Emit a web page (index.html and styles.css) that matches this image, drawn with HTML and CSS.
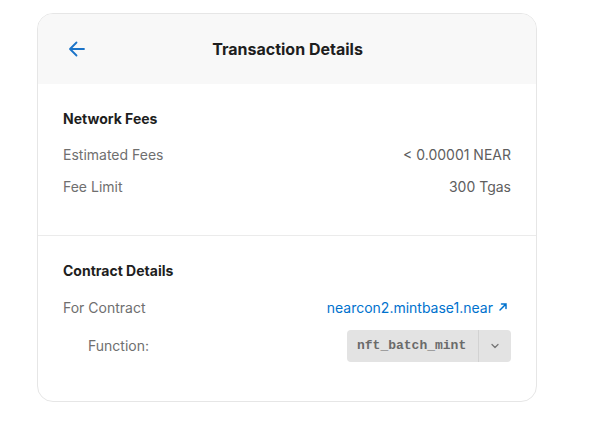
FILE: index.html
```html
<!DOCTYPE html>
<html>
<head>
<meta charset="utf-8">
<link rel="stylesheet" href="styles.css">
</head>
<body>
<div class="card">
  <div class="header">
    <button class="back" aria-label="Back">
      <svg width="20" height="20" viewBox="0 0 20 20" fill="none" stroke="#1a73c8" stroke-width="1.8" stroke-linecap="round" stroke-linejoin="round"><path d="M17 10H3.5M9.5 3.5L3 10l6.5 6.5"/></svg>
    </button>
    <h1 class="title">Transaction Details</h1>
  </div>
  <div class="section fees">
    <h2 class="heading">Network Fees</h2>
    <div class="row first"><span class="label">Estimated Fees</span><span class="value">&lt; 0.00001 NEAR</span></div>
    <div class="row second"><span class="label">Fee Limit</span><span class="value">300 Tgas</span></div>
  </div>
  <div class="section contract">
    <h2 class="heading">Contract Details</h2>
    <div class="row first"><span class="label">For Contract</span><a class="link" href="#">nearcon2.mintbase1.near <svg class="ext" width="10" height="10" viewBox="0 0 10 10" fill="none" stroke="#0072ce" stroke-width="1.5" stroke-linecap="round"><path d="M2 8L8 2M3.5 2H8v4.5"/></svg></a></div>
    <div class="row func"><span class="label indent">Function:</span>
      <div class="select"><span class="fn">nft_batch_mint</span><span class="chev"><svg width="12" height="12" viewBox="0 0 12 12" fill="none" stroke="#777" stroke-width="1.3" stroke-linecap="round" stroke-linejoin="round"><path d="M3 4.5L6 7.5l3-3"/></svg></span></div>
    </div>
  </div>
</div>
</body>
</html>
```
FILE: styles.css
```css
* { box-sizing: border-box; }
body {
  margin: 0;
  background: #fff;
  font-family: Inter, "Noto Sans", sans-serif;
  padding: 13px 0 0 37px;
}
.card {
  width: 500px;
  height: 389px;
  border: 1px solid #e6e6e6;
  border-radius: 16px;
  overflow: hidden;
  background: #fff;
}
.header {
  height: 70px;
  background: #f8f8f8;
  display: flex;
  align-items: center;
  justify-content: center;
  position: relative;
}
.back {
  position: absolute;
  left: 29px;
  top: 25px;
  border: 0;
  background: none;
  padding: 0;
  display: flex;
}
.title {
  margin: 0;
  font-size: 16px;
  font-weight: 700;
  color: #1e1e1e;
  padding-left: 1px;
}
.section {
  padding: 25px 25px 0 25px;
}
.fees {
  height: 152px;
  border-bottom: 1px solid #ebebeb;
}
.heading {
  margin: 0;
  font-size: 14px;
  line-height: 20px;
  font-weight: 700;
  color: #1e1e1e;
}
.row {
  display: flex;
  justify-content: space-between;
  align-items: center;
  font-size: 14px;
  line-height: 20px;
}
.fees .first { margin-top: 16px; }
.fees .second { margin-top: 12px; }
.contract .first { margin-top: 17px; }
.func { margin-top: 12px; }
.label { color: #6f6f6f; }
.indent { padding-left: 25px; }
.value { color: #5e5e5e; }
.link {
  color: #0072ce;
  text-decoration: none;
  display: flex;
  align-items: center;
  gap: 4px;
  padding-right: 3px;
}
.ext { margin-left: 1px; margin-top: -3px; }
.select {
  display: flex;
  height: 32px;
  width: 164px;
  background: #e3e3e3;
  border-radius: 4px;
  align-items: stretch;
}
.fn {
  flex: 1;
  display: flex;
  align-items: center;
  padding-left: 10px;
  font-family: "Liberation Mono", monospace;
  font-size: 13px;
  font-weight: 700;
  color: #6a6a6a;
  border-right: 1px solid #d2d2d2;
}
.chev {
  width: 32px;
  display: flex;
  align-items: center;
  justify-content: center;
}
```
